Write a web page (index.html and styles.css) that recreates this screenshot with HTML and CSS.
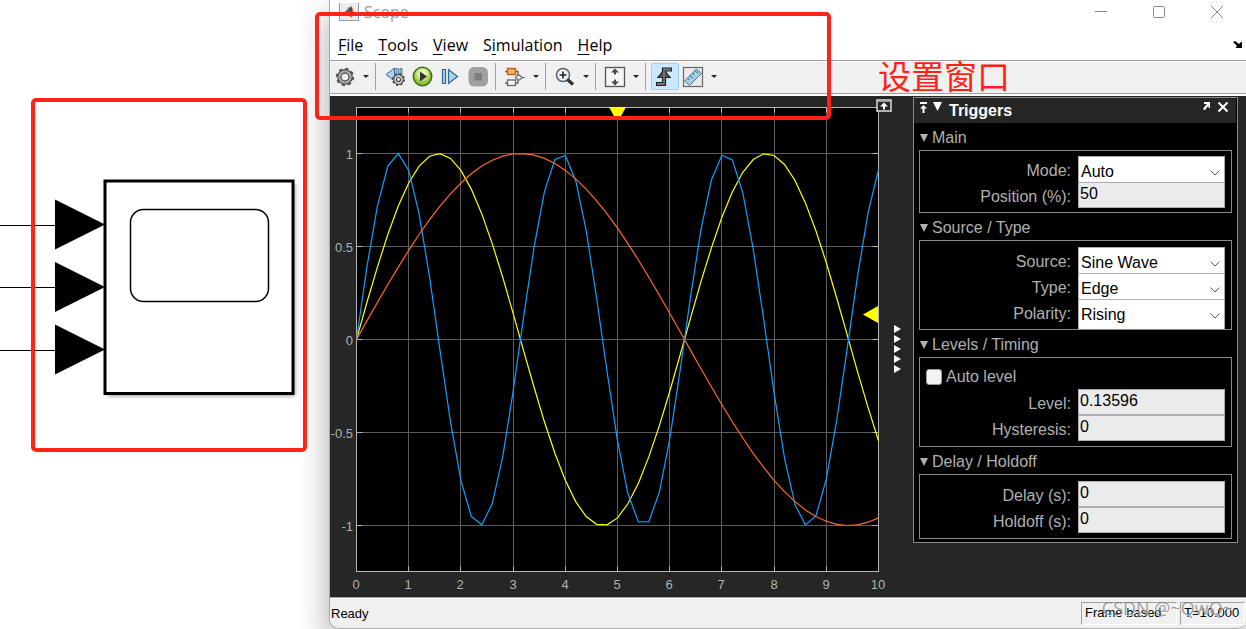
FILE: index.html
```html
<!DOCTYPE html>
<html lang="zh">
<head>
<meta charset="utf-8">
<title>Scope</title>
<link rel="stylesheet" href="styles.css">
</head>
<body>
<div class="page">
  <div class="model">
    <svg class="diagram" viewBox="0 0 329 629" width="329" height="629" role="img" aria-label="Scope block">
      <g fill="#000">
        <path d="M0 225h55v1H0zM0 287h55v1H0zM0 350h55v1H0z"/>
        <path d="M55 199.500L105 224.500L55 249.500zM55 262L105 287L55 312zM55 324.500L105 349.500L55 374.500z"/>
      </g>
      <rect class="block-shadow" x="107" y="184" width="188" height="212"/>
      <rect x="105" y="181" width="188" height="212.500" fill="#fff" stroke="#000" stroke-width="3"/>
      <rect x="130.500" y="209.500" width="138" height="92" rx="13" fill="#fff" stroke="#000" stroke-width="1.500"/>
    </svg>
    <div class="mark mark-block"></div>
  </div>

  <main class="window">
    <header class="titlebar">
      <svg class="logo" viewBox="0 0 20 18" width="20" height="18">
        <rect x=".5" y="-2" width="19" height="19.500" fill="#e9edf2" stroke="#8f9aa8"/>
        <path d="M3 10l4-2 3-4 2 1-3 6-2 2z" fill="#356fa5"/>
        <path d="M7 12l3-3 2-6c1 0 2 4 5 10-2-1-3-1-5 2-1-2-2-3-5-3z" fill="#df6a24"/>
        <path d="M10 9l2-6 1 3-1 6-2-2z" fill="#8e2718"/>
      </svg>
      <span class="title">Scope</span>
      <div class="winbtns">
        <button aria-label="Minimize"><svg width="14" height="14"><path d="M1 6.500h12"/></svg></button>
        <button aria-label="Maximize"><svg width="14" height="14"><rect x="1.500" y="1.500" width="11" height="11" rx="1"/></svg></button>
        <button aria-label="Close"><svg width="14" height="14"><path d="M1 1l12 12M13 1L1 13"/></svg></button>
      </div>
    </header>

    <nav class="menubar">
      <button><u>F</u>ile</button>
      <button><u>T</u>ools</button>
      <button><u>V</u>iew</button>
      <button>S<u>i</u>mulation</button>
      <button><u>H</u>elp</button>
      <button class="dock" aria-label="Dock"><svg width="10" height="8"><path d="M0 1l2-1 4 3 2-2h1v6H3V6l1-1z" fill="#000"/></svg></button>
    </nav>

    <div class="toolbar">
      <button class="tool" aria-label="Configuration">
        <svg viewBox="0 0 22 22"><circle cx="11" cy="11" r="8" fill="none" stroke="#555" stroke-width="2.400" stroke-dasharray="3.140 3.140"/><circle cx="11" cy="11" r="7.200" fill="#c9c9c9" stroke="#555" stroke-width="1.400"/><circle cx="11" cy="11" r="4" fill="#eee" stroke="#555" stroke-width="1.400"/><circle cx="11" cy="11" r="5.600" fill="none" stroke="#a3a3a3"/></svg>
      </button>
      <button class="caret" aria-label="Configuration options"></button>
      <i class="sep"></i>
      <button class="tool" aria-label="Step back options">
        <svg viewBox="0 0 22 22"><path d="M2 8.500L10.500 2v13z" fill="#a9d3ee" stroke="#35678c"/><path d="M12 2.500h2.300v8H12zM16 2.500h2v8h-2z" fill="#a9d3ee" stroke="#35678c" stroke-width=".8"/><circle cx="14.500" cy="13.500" r="5.600" fill="none" stroke="#444" stroke-width="1.800" stroke-dasharray="2.200 2.200"/><circle cx="14.500" cy="13.500" r="4.800" fill="#d5d5d5" stroke="#555" stroke-width="1.200"/><circle cx="14.500" cy="13.500" r="2" fill="#fff" stroke="#444" stroke-width="1.200"/></svg>
      </button>
      <button class="tool" aria-label="Run">
        <svg viewBox="0 0 22 22"><defs><radialGradient id="run" cy=".35"><stop offset="0" stop-color="#fff"/><stop offset=".45" stop-color="#dcf09a"/><stop offset="1" stop-color="#8cc234"/></radialGradient></defs><circle cx="10.500" cy="10.500" r="9.200" fill="url(#run)" stroke="#41701c" stroke-width="1.600"/><path d="M8 5.500l7 5-7 5z" fill="#333"/></svg>
      </button>
      <button class="tool" aria-label="Step forward">
        <svg viewBox="0 0 22 22"><path d="M2.500 3.500h3v14h-3zM8.500 3.500l9 7-9 7z" fill="#a9d3ee" stroke="#35678c" stroke-width="1.200"/></svg>
      </button>
      <button class="tool" aria-label="Stop" disabled>
        <svg viewBox="0 0 22 22"><rect x=".5" y="1" width="19.500" height="19.500" rx="5.500" fill="#a0a0a0"/><rect x="6.500" y="7" width="7.500" height="7.500" fill="#7d7d7d"/></svg>
      </button>
      <i class="sep"></i>
      <button class="tool" aria-label="Highlight block">
        <svg viewBox="0 0 22 22"><path d="M1 5.500h13v5M1 17h13v-5" fill="none" stroke="#666" stroke-width="1.300"/><rect x="3.500" y="2.500" width="8" height="6" fill="#ffb066" stroke="#c75d08" stroke-width="1.400"/><rect x="3.500" y="14" width="8" height="5.500" fill="#f5f5f5" stroke="#666" stroke-width="1.300"/><path d="M11.500 11.500l3-3 4 3-4 3z" fill="#f4f4f4" stroke="#666" stroke-width="1.200"/><path d="M18 11.500h3" stroke="#666"/></svg>
      </button>
      <button class="caret" aria-label="Highlight options"></button>
      <i class="sep"></i>
      <button class="tool" aria-label="Zoom">
        <svg viewBox="0 0 22 22"><circle cx="9" cy="9" r="6.500" fill="#eef5f9" stroke="#59646c" stroke-width="1.500"/><path d="M9 5.500v7M5.500 9h7" stroke="#222" stroke-width="1.600"/><path d="M13.500 13.500l5.500 5" stroke="#333" stroke-width="3.400"/></svg>
      </button>
      <button class="caret" aria-label="Zoom options"></button>
      <i class="sep"></i>
      <button class="tool" aria-label="Scale axes">
        <svg viewBox="0 0 22 22"><rect x="1.500" y="1.500" width="19" height="19" fill="#f5f5f5" stroke="#555" stroke-width="1.300"/><path d="M11 2.500l4 4h-3v2h-2v-2H7zM11 19.500l-4-4h3v-2h2v2h3z" fill="#484848"/></svg>
      </button>
      <button class="caret" aria-label="Scale options"></button>
      <i class="sep"></i>
      <button class="tool on" aria-label="Triggers" aria-pressed="true">
        <svg viewBox="0 0 22 22"><path d="M2 18h8V3.500h8" fill="none" stroke="#222" stroke-width="4.200"/><path d="M10 4L16 11.500H4z" fill="#555" stroke="#222" stroke-width="1.200"/><path d="M3 18h7V3.500h7" fill="none" stroke="#777" stroke-width="1.800"/></svg>
      </button>
      <button class="tool" aria-label="Measurements">
        <svg viewBox="0 0 22 22"><rect x="1.500" y="1.500" width="19" height="19" fill="#eaeaea" stroke="#666" stroke-width="1.200"/><path d="M2.500 15L14.500 3l5 4.500L7.500 19.500z" fill="#a6cfe6" stroke="#4c7590"/><path d="M5.500 12l2 2M8 9.500l3 3M10.500 7l2 2M13 4.500l3 3" stroke="#315a75"/></svg>
      </button>
      <button class="caret" aria-label="Measurement options"></button>
    </div>

    <div class="content">
      <div class="plot">
        <svg id="chart" viewBox="0 0 550 501" role="img" aria-label="Scope traces"></svg>
        <button class="maximize" aria-label="Maximize axes"><svg width="16" height="13"><path d="M1 1h14v11H1z" fill="#262626" stroke="#ddd" stroke-width="1.500"/><path d="M2 2.500h12" stroke="#999"/><path d="M8 3.500l4 4H9v3H7v-3H4z" fill="#fff"/></svg></button>
      </div>
      <button class="splitter" aria-label="Collapse panel">
        <svg width="7" height="48" fill="#fff"><path d="M0 0l7 4-7 4zM0 10l7 4-7 4zM0 20l7 4-7 4zM0 30l7 4-7 4zM0 40l7 4-7 4z"/></svg>
      </button>

      <aside class="panel">
        <div class="panel-head">
          <button aria-label="Move up"><svg width="9" height="11"><path d="M1 0h7v2H1zM4.500 3L8 6.500H5.500V11h-2V6.500H1z" fill="#fff"/></svg></button>
          <button aria-label="Collapse"><svg width="9" height="9"><path d="M0 0h9L4.500 9z" fill="#fff"/></svg></button>
          <h2>Triggers</h2>
          <button class="undock" aria-label="Undock"><svg width="8" height="8"><path d="M1 0h6v6H5.500V3.500L2 8H.5V6L4 2H1z" fill="#fff"/></svg></button>
          <button aria-label="Close panel"><svg width="10" height="10"><path d="M.5 .5l9 9M9.500 .5l-9 9" stroke="#fff" stroke-width="2"/></svg></button>
        </div>

        <h3>Main</h3>
        <div class="group group-main">
          <div class="row"><label for="mode">Mode:</label><span class="drop"><select id="mode"><option>Auto</option></select><svg width="10" height="6"><path d="M.5 .5L5 5 9.500 .5"/></svg></span></div>
          <div class="row"><label for="pos">Position (%):</label><input type="text" id="pos" value="50"></div>
        </div>

        <h3>Source / Type</h3>
        <div class="group group-source">
          <div class="row"><label for="src">Source:</label><span class="drop"><select id="src"><option>Sine Wave</option></select><svg width="10" height="6"><path d="M.5 .5L5 5 9.500 .5"/></svg></span></div>
          <div class="row"><label for="type">Type:</label><span class="drop"><select id="type"><option>Edge</option></select><svg width="10" height="6"><path d="M.5 .5L5 5 9.500 .5"/></svg></span></div>
          <div class="row last"><label for="pol">Polarity:</label><span class="drop"><select id="pol"><option>Rising</option></select><svg width="10" height="6"><path d="M.5 .5L5 5 9.500 .5"/></svg></span></div>
        </div>

        <h3>Levels / Timing</h3>
        <div class="group">
          <div class="check"><input type="checkbox" id="auto"><label for="auto">Auto level</label></div>
          <div class="row"><label for="level">Level:</label><input type="text" id="level" value="0.13596"></div>
          <div class="row"><label for="hyst">Hysteresis:</label><input type="text" id="hyst" value="0"></div>
        </div>

        <h3>Delay / Holdoff</h3>
        <div class="group group-delay">
          <div class="row"><label for="delay">Delay (s):</label><input type="text" id="delay" value="0"></div>
          <div class="row"><label for="hold">Holdoff (s):</label><input type="text" id="hold" value="0"></div>
        </div>
      </aside>
    </div>

    <footer class="status">
      <span class="ready">Ready</span>
      <span class="cell cell-mode">Frame based</span>
      <span class="cell cell-time">T=10.000</span>
      <span class="watermark">CSDN @~QwQ~</span>
    </footer>
    <div class="mark mark-tools"></div>
    <div class="note">设置窗口</div>
  </main>
</div>
<script src="chart.js"></script>
</body>
</html>
```
FILE: styles.css
```css
* { box-sizing: border-box; }
body {
  margin: 0;
  background: #fff;
  font-family: "Liberation Sans", Arial, sans-serif;
  font-size: 16px;
  color: #000;
}
button {
  display: flex;
  align-items: center;
  justify-content: center;
  border: 0;
  padding: 0;
  background: none;
  font: inherit;
  color: inherit;
}
svg { display: block; }

.page {
  display: grid;
  grid-template-columns: 329px 1fr;
  min-height: 100vh;
  overflow: hidden;
}
.model { position: relative; }
.block-shadow { fill: #999; filter: blur(2px); }

.mark {
  position: absolute;
  border: 4px solid #ff2216;
  border-radius: 5px;
  z-index: 3;
  pointer-events: none;
}
.mark-block { left: 31px; top: 98px; width: 276px; height: 354px; }
.mark-tools { left: -15px; top: 12px; width: 516px; height: 108px; }
.note {
  position: absolute;
  left: 548px;
  top: 51px;
  font-family: "Noto Sans CJK SC", sans-serif;
  font-size: 33px;
  line-height: 48px;
  color: #ff2216;
}

.window {
  position: relative;
  display: flex;
  flex-direction: column;
  margin-bottom: 1px;
  border-left: 1px solid #aaa;
  border-bottom: 1px solid #aaa;
  border-radius: 0 0 10px 10px;
  background: #fff;
  box-shadow: -1px 14px 32px rgba(0, 0, 0, .32);
}
.titlebar {
  display: flex;
  align-items: center;
  height: 26px;
  padding: 0 0 2px 9px;
  font-family: "Open Sans", sans-serif;
  color: #999;
}
.title { margin-left: 5px; line-height: 24px; }
.winbtns { display: flex; margin-left: auto; }
.winbtns button { width: 58px; height: 24px; }
.winbtns svg { fill: none; stroke: #888; }

.menubar {
  display: flex;
  align-items: center;
  gap: 15px;
  height: 34px;
  padding: 3px 3px 0 8px;
  font-family: "Open Sans", sans-serif;
  font-size: 16px;
}
.menubar button { display: block; line-height: 24px; }
.menubar u { text-underline-offset: 3px; }
.menubar .dock { margin-left: auto; }

.toolbar {
  display: flex;
  align-items: center;
  height: 36px;
  padding: 0 1px 2px;
  border-top: 1px solid #a0a0a0;
  border-bottom: 2px solid #fff;
  background: #f0f0f0;
  box-shadow: inset 0 1px #fff, inset 0 -1px #a0a0a0;
}
.tool { width: 28px; height: 27px; flex: none; }
.tool svg { width: 22px; height: 22px; }
.tool.on { background: #cce8ff; border: 1px solid #99d1ff; border-radius: 2px; }
.caret { width: 14px; height: 27px; flex: none; }
.caret::after {
  content: "";
  border: 3px solid transparent;
  border-top-color: #222;
  border-bottom: 0;
}
.sep { width: 8px; height: 27px; flex: none; border-left: 2px solid transparent; background: linear-gradient(#a0a0a0, #a0a0a0) 0 0 / 1px 100% no-repeat; }

.content {
  display: grid;
  grid-template-columns: 1fr 33px 325px 8px;
  align-items: start;
  flex: 1;
  background: #262626;
}
.plot { position: relative; min-width: 0; }
#chart { width: 100%; overflow: visible; font-size: 13px; }
.grid { stroke: #5c5c5c; }
.axis { fill: none; stroke: #b5b5b5; }
.tick { fill: #b0b0b0; }
.trace { fill: none; stroke-width: 1.2; }
.marker { fill: #ff0; }
.maximize { position: absolute; right: -12px; top: 3px; }
.splitter { align-self: stretch; align-items: flex-start; padding-top: 229px; padding-left: 2px; }

.panel {
  margin-top: 1px;
  padding-bottom: 3px;
  border: 1px solid #8a8a8a;
  background: #000;
  color: #b0b0b0;
}
.panel-head {
  display: flex;
  align-items: flex-start;
  gap: 5px;
  height: 25px;
  margin-right: 1px;
  padding: 4px 8px 0 5px;
  background: #262626;
  color: #fff;
}
.panel-head h2 { flex: 1; margin: 0 0 0 2px; font-size: 16px; line-height: 18px; }
.panel-head .undock { margin-right: 2px; }
h3 {
  display: flex;
  align-items: center;
  gap: 4px;
  height: 27px;
  margin: 0;
  padding: 2px 0 0 6px;
  font-size: 16px;
  font-weight: 400;
}
h3::before { content: ""; border: 4px solid transparent; border-top: 8px solid #b0b0b0; border-bottom: 0; }
.group {
  margin: 0 5px;
  padding: 0 6px 5px;
  border: 1px solid #8a8a8a;
}
.group-main { padding-top: 5px; padding-bottom: 4px; }
.group-source { padding-top: 6px; padding-bottom: 0; }
.group-delay { padding-top: 6px; }
.row {
  display: grid;
  grid-template-columns: 1fr 147px;
  gap: 7px;
  height: 26px;
}
.row label { padding-top: 2px; line-height: 26px; text-align: right; }
.row.last { height: 30px; }
.row input, .row select {
  width: 100%;
  height: 26px;
  margin: 0;
  border: 1px solid #abadb3;
  border-radius: 0;
  background: #ebebeb;
  font: inherit;
  color: #000;
}
.row input { padding: 0 0 3px 1px; }
.row select { display: block; appearance: none; padding: 4px 0 0 2px; border-bottom: 0; background: #fff; }
.row.last select { height: 30px; padding-bottom: 4px; }
.drop { position: relative; }
.drop svg { position: absolute; right: 5px; top: 14px; fill: none; stroke: #555; }
.check { display: flex; align-items: center; gap: 4px; height: 31px; padding-top: 6px; }
.check input {
  appearance: none;
  width: 16px;
  height: 16px;
  margin: 0;
  border: 1px solid #999;
  border-radius: 3px;
  background: #f3f3f3;
}

.status {
  position: relative;
  display: flex;
  align-items: center;
  gap: 3px;
  height: 31px;
  padding: 0 1px;
  border-top: 1px solid #a0a0a0;
  border-radius: 0 0 9px 9px;
  background: #f0f0f0;
  box-shadow: inset 0 1px #fff;
  font-size: 13px;
}
.ready { flex: 1; }
.cell {
  height: 23px;
  padding-left: 3px;
  border: 1px solid;
  border-color: #a0a0a0 #fff #fff #a0a0a0;
  line-height: 20px;
}
.cell-mode { width: 96px; }
.cell-time { width: 65px; }
.watermark {
  position: absolute;
  right: 13px;
  top: 0;
  font-family: "Open Sans", sans-serif;
  font-size: 18px;
  line-height: 20px;
  color: rgba(120, 120, 120, .7);
  text-shadow: 1px 1px rgba(255, 255, 255, .6);
}
```
FILE: chart.js
```js
const X0 = 26.5, X1 = 548.5, TOP = 11.5, BOTTOM = 475.5, ZERO = 243.5;
const X_UNIT = (X1 - X0) / 10, Y_UNIT = 186;
const px = t => X0 + t * X_UNIT;
const py = v => ZERO - v * Y_UNIT;
const snap = n => Math.floor(n) + 0.5;

let out = `<rect x="${X0}" y="${TOP}" width="${X1 - X0}" height="${BOTTOM - TOP}" fill="#000"/>`;
let ticks = "";
for (let t = 0; t <= 10; t++) {
  const x = snap(px(t));
  if (t > 0 && t < 10) out += `<path class="grid" d="M${x} ${TOP}V${BOTTOM}"/>`;
  ticks += `<path class="axis" d="M${x} ${BOTTOM}v-5M${x} ${TOP}v5"/>`;
  ticks += `<text class="tick" x="${x - 0.5}" y="493" text-anchor="middle">${t}</text>`;
}
for (const v of [1, 0.5, 0, -0.5, -1]) {
  const y = snap(py(v));
  out += `<path class="grid" d="M${X0} ${y}H${X1}"/>`;
  ticks += `<path class="axis" d="M${X0} ${y}h6M${X1} ${y}h-6"/>`;
  ticks += `<text class="tick" x="23" y="${y + 5}" text-anchor="end">${v}</text>`;
}
out += ticks + `<rect class="axis" x="${X0}" y="${TOP}" width="${X1 - X0}" height="${BOTTOM - TOP}"/>`;

for (const [rate, color] of [[1, "#ffff11"], [2, "#139fff"], [0.5, "#ff6929"]]) {
  const points = [];
  for (let i = 0; i <= 50; i++) {
    const t = i * 0.2;
    points.push(`${px(t).toFixed(1)},${py(Math.sin(rate * t)).toFixed(1)}`);
  }
  out += `<polyline class="trace" stroke="${color}" points="${points.join(" ")}"/>`;
}
out += `<path class="marker" d="M279 11h17l-6 11h-5z"/><path d="M287.500 22v3" stroke="#d95319"/>`;
out += `<path class="marker" d="M548 210v17l-15-8.500z"/>`;
document.getElementById("chart").innerHTML = out;
```
